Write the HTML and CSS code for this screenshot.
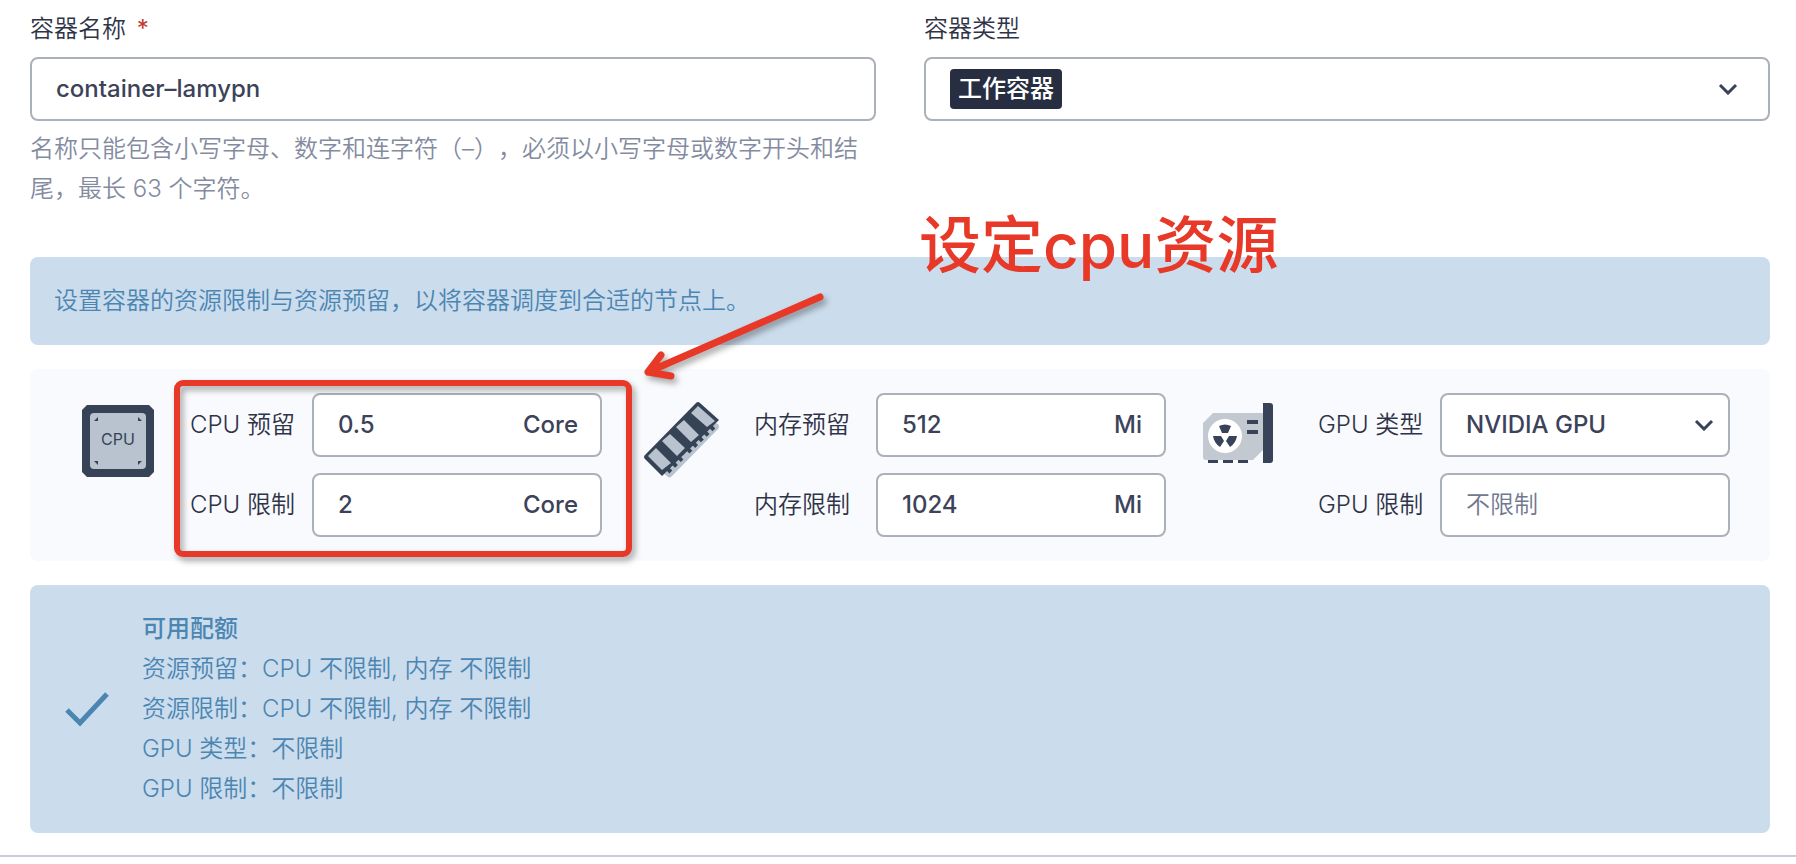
FILE: index.html
```html
<!DOCTYPE html>
<html lang="zh-CN">
  <head>
    <meta charset="UTF-8">
    <title>容器配置</title>
    <link rel="stylesheet" href="styles.css">
  </head>
  <body>
    <form class="card">
      <div class="row">
        <div class="field">
          <label for="name">容器名称 <span class="required">*</span></label>
          <div class="control">
            <input type="text" id="name" value="container–lamypn">
          </div>
          <p class="help">名称只能包含小写字母、数字和连字符（–），必须以小写字母或数字开头和结尾，最长 63 个字符。</p>
        </div>
        <div class="field">
          <label for="type">容器类型</label>
          <div class="control">
            <select id="type" class="tag">
              <option>工作容器</option>
            </select>
            <svg class="chevron type-chevron" viewBox="0 0 20 12"><path d="M2 2l8 8 8-8"/></svg>
          </div>
        </div>
      </div>

      <div class="banner">设置容器的资源限制与资源预留，以将容器调度到合适的节点上。</div>

      <div class="resources">
        <div class="resource">
          <svg class="icon" viewBox="0 0 96 96">
            <path fill="#364357" d="M17 12h62l5 5v62l-5 5H17l-5-5V17z"/>
            <rect x="20" y="20" width="56" height="56" rx="4" fill="#b8c3cf"/>
            <path fill="#364357" d="M28 24v4h-4zM68 24v4h4zM28 72v-4h-4zM68 72v-4h4z"/>
            <text x="48" y="52" text-anchor="middle" class="icon-text">CPU</text>
          </svg>
          <div class="inputs">
            <label for="cpu-request">CPU 预留</label>
            <div class="control"><input type="text" id="cpu-request" value="0.5"><span>Core</span></div>
            <label for="cpu-limit">CPU 限制</label>
            <div class="control"><input type="text" id="cpu-limit" value="2"><span>Core</span></div>
          </div>
          <div class="mark-box"></div>
          <svg class="mark-arrow" viewBox="0 0 190 96">
            <path d="M180 10L8 85M21 68L8 85l23 4"/>
          </svg>
          <div class="mark-text">设定cpu资源</div>
        </div>

        <div class="resource">
          <svg class="icon" viewBox="0 0 96 96">
            <path fill="#b8c3cf" d="M79 29l5 2q2 3 0 5L38 83q-3 3-5 0l-4-3z"/>
            <path fill="#364357" d="M62 10q2-2 4 0l19 17-57 56L11 66q-2-2 0-4z"/>
            <path fill="#b8c3cf" d="M64 13l17 15-8 6-16-14zM50 27l15 15-8 7-15-15zM36 41l15 14-8 8-15-15zM22 55l15 15-9 7-14-14z"/>
            <path stroke="#364357" stroke-width="4" stroke-dasharray="4 4" fill="none" d="M34 79l14-14M54 59l27-26"/>
          </svg>
          <div class="inputs">
            <label for="mem-request">内存预留</label>
            <div class="control"><input type="text" id="mem-request" value="512"><span>Mi</span></div>
            <label for="mem-limit">内存限制</label>
            <div class="control"><input type="text" id="mem-limit" value="1024"><span>Mi</span></div>
          </div>
        </div>

        <div class="resource">
          <svg class="icon" viewBox="0 0 96 96">
            <path fill="#c2c9d1" d="M15 20h50v37L55 67H8q-3 0-3-3V30z"/>
            <circle cx="27" cy="43" r="17" fill="#fff"/>
            <path fill="#38435a" d="M21 33q6-3 12 0l-3 7h-6zM15 43h8l3 5-4 6q-6-4-7-11zM39 43h-8l-3 5 4 6q6-4 7-11z"/>
            <path fill="#38435a" d="M49 27h11v4H49zM49 37h11v4H49zM65 10h7q3 0 3 3v54q0 3-3 3h-7zM10 67h10v3H10zM25 67h10v3H25zM40 67h10v3H40z"/>
          </svg>
          <div class="inputs">
            <label for="gpu-type">GPU 类型</label>
            <div class="control">
              <select id="gpu-type">
                <option>NVIDIA GPU</option>
              </select>
              <svg class="chevron gpu-chevron" viewBox="0 0 20 12"><path d="M2 2l8 8 8-8"/></svg>
            </div>
            <label for="gpu-limit">GPU 限制</label>
            <div class="control"><input type="text" id="gpu-limit" placeholder="不限制"></div>
          </div>
        </div>
      </div>

      <div class="quota">
        <svg class="check" viewBox="0 0 44 36"><path d="M2 19l13 13L42 3"/></svg>
        <div>
          <strong>可用配额</strong>
          <p>资源预留：CPU 不限制, 内存 不限制</p>
          <p>资源限制：CPU 不限制, 内存 不限制</p>
          <p>GPU 类型：不限制</p>
          <p>GPU 限制：不限制</p>
        </div>
      </div>
    </form>
  </body>
</html>
```
FILE: styles.css
```css
* {
    box-sizing: border-box;
}

body {
    margin: 0;
    background: #fff;
    color: #2f3348;
    font-family: Inter, "Noto Sans CJK SC", sans-serif;
    font-size: 24px;
    font-weight: 350;
    line-height: 40px;
    text-spacing-trim: space-all;
    overflow-x: hidden;
}

p {
    margin: 0;
}

.card {
    margin: 0 -6px;
    padding: 9px 32px 22px 36px;
    border-bottom: 2px solid #c9ccd2;
    border-radius: 0 0 8px 8px;
}

.row {
    display: grid;
    grid-template-columns: 1fr 1fr;
    gap: 48px;
    margin-bottom: 48px;
}

.field label {
    display: block;
    margin-bottom: 8px;
}

.required {
    margin-left: 4px;
    color: #c0392b;
    font-weight: 400;
}

.control {
    display: flex;
    align-items: center;
    min-width: 0;
    height: 64px;
    padding: 0 22px 0 24px;
    background: #fff;
    border: 2px solid #abb1b9;
    border-radius: 8px;
    color: #3c4359;
    font-weight: 500;
}

input, select {
    flex: 1;
    min-width: 0;
    padding: 0;
    border: none;
    outline: none;
    background: none;
    appearance: none;
    color: inherit;
    font: inherit;
}

input::placeholder {
    color: #717890;
    font-weight: 350;
    opacity: 1;
}

.tag {
    flex: none;
    height: 40px;
    padding: 0 8px;
    border-radius: 4px;
    background: #272e41;
    color: #fff;
    font-weight: 500;
}

.chevron {
    width: 20px;
    height: 12px;
    margin-left: auto;
    fill: none;
    stroke: #364357;
    stroke-width: 3;
}

.type-chevron {
    margin-right: 8px;
}

.gpu-chevron {
    margin-right: -8px;
}

.help {
    margin-top: 8px;
    color: #848ba1;
}

.banner, .quota {
    padding: 24px;
    border-radius: 8px;
    background: #cbdcec;
    color: #4b86b3;
}

.resources {
    display: grid;
    grid-template-columns: repeat(3, 1fr);
    margin: 24px 0;
    padding: 24px;
    border-radius: 8px;
    background: #f9fafd;
}

.resource {
    position: relative;
    display: flex;
    gap: 24px;
    padding: 0 16px;
}

.icon {
    flex: none;
    width: 96px;
    height: 96px;
}

.icon-text {
    fill: #364357;
    font-size: 16px;
    font-weight: 400;
}

.inputs {
    flex: 1;
    display: grid;
    grid-template-columns: 106px 1fr;
    align-items: center;
    gap: 16px;
    min-width: 0;
}

.inputs label {
    white-space: nowrap;
}

/* red callout over the CPU fields */
.mark-box {
    position: absolute;
    top: -13px;
    right: -14px;
    left: 120px;
    height: 177px;
    border: 6px solid #e83828;
    border-radius: 9px;
    filter: drop-shadow(3px 4px 3px rgba(0, 0, 0, .35));
    pointer-events: none;
}

.mark-arrow {
    position: absolute;
    top: -106px;
    left: 586px;
    width: 190px;
    height: 96px;
    fill: none;
    stroke: #e83828;
    stroke-width: 7;
    stroke-linecap: round;
    stroke-linejoin: round;
    filter: drop-shadow(3px 4px 3px rgba(0, 0, 0, .35));
}

.mark-text {
    position: absolute;
    top: -187px;
    left: 865px;
    color: #e83828;
    font-size: 62px;
    font-weight: 500;
    line-height: 80px;
    white-space: nowrap;
}

.quota {
    display: flex;
    align-items: center;
    gap: 33px;
    padding-left: 35px;
}

.check {
    width: 44px;
    height: 36px;
    fill: none;
    stroke: #4b86b3;
    stroke-width: 5;
}

.quota strong {
    display: block;
    font-weight: 500;
}
```
